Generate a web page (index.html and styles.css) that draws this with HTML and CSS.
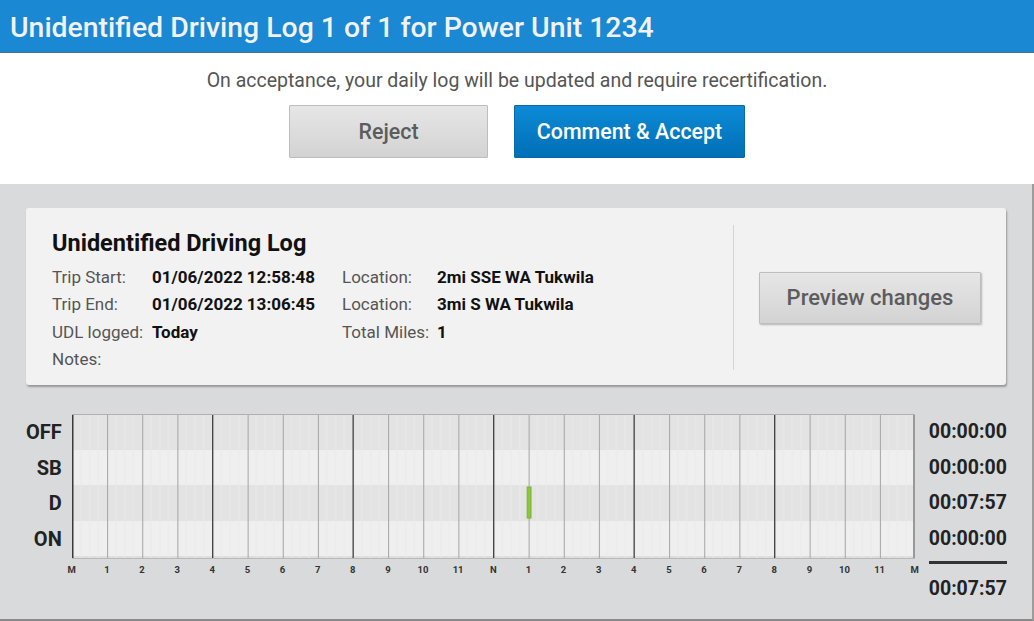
FILE: index.html
```html
<!DOCTYPE html>
<html lang="en">
<head>
    <meta charset="UTF-8">
    <meta name="viewport" content="width=device-width, initial-scale=1.0">
    <title>Unidentified Driving Log</title>
    <link rel="stylesheet" href="styles.css">
</head>
<body>

<header class="title-bar">
    <h1>Unidentified Driving Log 1 of 1 for Power Unit 1234</h1>
</header>

<section class="notice">
    <p>On acceptance, your daily log will be updated and require recertification.</p>
    <div class="notice-actions">
        <button class="btn btn-grey btn-reject">Reject</button>
        <button class="btn btn-blue btn-accept">Comment &amp; Accept</button>
    </div>
</section>

<main class="panel">
    <div class="card">
        <div class="card-info">
            <h2>Unidentified Driving Log</h2>
            <div class="info-grid">
                <span class="lbl">Trip Start:</span><span class="val">01/06/2022 12:58:48</span>
                <span class="lbl">Location:</span><span class="val">2mi SSE WA Tukwila</span>
                <span class="lbl">Trip End:</span><span class="val">01/06/2022 13:06:45</span>
                <span class="lbl">Location:</span><span class="val">3mi S WA Tukwila</span>
                <span class="lbl">UDL logged:</span><span class="val">Today</span>
                <span class="lbl">Total Miles:</span><span class="val">1</span>
                <span class="lbl">Notes:</span><span class="val"></span>
            </div>
        </div>
        <div class="card-side">
            <button class="btn btn-grey btn-preview">Preview changes</button>
        </div>
    </div>

    <div class="log">
        <div class="status-labels">
            <span>OFF</span>
            <span>SB</span>
            <span>D</span>
            <span>ON</span>
        </div>

        <div class="chart">
            <svg class="grid" width="843" height="145" viewBox="0 0 843 145">
                <defs>
                    <!-- one hour = 843 / 24 -->
                    <pattern id="quarters" width="35.125" height="145" patternUnits="userSpaceOnUse">
                        <rect x="8.3" y="0" width="1" height="145" fill="#e9e9e9"/>
                        <rect x="17.1" y="0" width="1" height="145" fill="#e9e9e9"/>
                        <rect x="25.8" y="0" width="1" height="145" fill="#e9e9e9"/>
                    </pattern>
                    <pattern id="hours" width="35.125" height="145" patternUnits="userSpaceOnUse">
                        <rect x="0" y="0" width="1" height="145" fill="#a3a3a3"/>
                    </pattern>
                </defs>
                <rect x="0" y="0" width="843" height="36" fill="#e3e3e3"/>
                <rect x="0" y="36" width="843" height="35" fill="#efefef"/>
                <rect x="0" y="71" width="843" height="36" fill="#e3e3e3"/>
                <rect x="0" y="107" width="843" height="35" fill="#efefef"/>
                <rect x="0" y="142" width="843" height="3" fill="#dedede"/>
                <rect x="0" y="0" width="843" height="145" fill="url(#quarters)"/>
                <rect x="0" y="0" width="843" height="145" fill="url(#hours)"/>
                <!-- every fourth hour is darker -->
                <rect x="0" y="0" width="1.5" height="145" fill="#3a3a3a"/>
                <rect x="140" y="0" width="1.2" height="145" fill="#444"/>
                <rect x="280.5" y="0" width="1.2" height="145" fill="#444"/>
                <rect x="421" y="0" width="1.2" height="145" fill="#444"/>
                <rect x="561.5" y="0" width="1.2" height="145" fill="#444"/>
                <rect x="702" y="0" width="1.2" height="145" fill="#444"/>
                <rect x="841" y="0" width="2" height="145" fill="#999"/>
                <rect x="0" y="0" width="843" height="1" fill="#b0b0b0"/>
                <rect x="0" y="144" width="843" height="1" fill="#b8b8b8"/>
                <!-- driving segment 12:58:48 - 13:06:45 -->
                <rect x="455.2" y="73" width="3.8" height="31" fill="#8cc63f" stroke="#7cb22f" stroke-width="1"/>
            </svg>
            <div class="hours">
                <span>M</span><span>1</span><span>2</span><span>3</span><span>4</span><span>5</span>
                <span>6</span><span>7</span><span>8</span><span>9</span><span>10</span><span>11</span>
                <span>N</span><span>1</span><span>2</span><span>3</span><span>4</span><span>5</span>
                <span>6</span><span>7</span><span>8</span><span>9</span><span>10</span><span>11</span>
                <span>M</span>
            </div>
        </div>

        <div class="totals">
            <span>00:00:00</span>
            <span>00:00:00</span>
            <span>00:07:57</span>
            <span>00:00:00</span>
            <span class="grand">00:07:57</span>
        </div>
    </div>
</main>

</body>
</html>
```

FILE: styles.css
```css
* {
    box-sizing: border-box;
}
html, body {
    margin: 0;
    height: 100%;
}
body {
    font-family: Roboto, "Noto Sans", Arial, sans-serif;
    color: #333;
    background: #fff;
    display: flex;
    flex-direction: column;
    overflow: hidden;
}

.title-bar {
    height: 53px;
    background: #1a88d2;
    border-bottom: 1px solid #4a6f8c;
    padding: 0 10px;
    display: flex;
    align-items: center;
}
.title-bar h1 {
    margin: 2px 0 0 0;
    font-size: 28.4px;
    font-weight: 500;
    color: #f2f2f2;
}

.notice {
    height: 131px;
    text-align: center;
    padding-top: 15px;
    background: #fff;
}
.notice p {
    margin: 0;
    font-size: 19.5px;
    color: #555;
    line-height: 25px;
}
.notice-actions {
    display: flex;
    justify-content: center;
    gap: 26px;
    margin-top: 12px;
}

.btn {
    font-family: inherit;
    font-size: 21.4px;
    font-weight: 500;
    border-radius: 1px;
    cursor: pointer;
}
.btn-grey {
    color: #5c5c5c;
    background: linear-gradient(#e6e6e6, #d3d3d3);
    border: 1px solid #bdbdbd;
}
.btn-blue {
    color: #fff;
    background: linear-gradient(#0d8ad6, #006fb6);
    border: 1px solid #0a6aa8;
}
.btn-reject {
    width: 199px;
    height: 53px;
}
.btn-accept {
    width: 231px;
    height: 53px;
}
.btn-preview {
    width: 222px;
    height: 52px;
    font-size: 22px;
    box-shadow: 1px 1px 2px rgba(0, 0, 0, 0.25);
}

.panel {
    flex: 1;
    background: #d9dadb;
    border-right: 2px solid #9c9c9c;
    border-bottom: 2px solid #8a8a8a;
    padding: 24px 26px 0 26px;
}

.card {
    height: 177px;
    background: #f2f2f2;
    border-radius: 3px;
    box-shadow: 1px 2px 2px rgba(0, 0, 0, 0.3);
    display: flex;
}
.card-info {
    flex: 1;
    padding: 21px 26px 0 26px;
}
.card-info h2 {
    margin: 0 0 7px 0;
    font-size: 23.5px;
    font-weight: 700;
    color: #111;
    line-height: 28px;
}
.info-grid {
    display: grid;
    grid-template-columns: 100px 190px 95px auto;
    font-size: 17px;
    line-height: 27.4px;
}
.lbl {
    color: #555;
}
.val {
    font-weight: 700;
    color: #111;
}
.card-side {
    width: 273px;
    margin: 17px 0 15px 0;
    border-left: 1px solid #d4d4d4;
    display: flex;
    align-items: center;
    justify-content: center;
}

.log {
    display: flex;
    margin-top: 29px;
}
.status-labels {
    width: 36px;
    display: flex;
    flex-direction: column;
    align-items: flex-end;
    font-size: 20px;
    font-weight: 700;
    color: #222;
}
.status-labels span {
    height: 35.5px;
    line-height: 36px;
}
.chart {
    margin-left: 10px;
    width: 843px;
}
.grid {
    display: block;
}
.hours {
    display: flex;
    justify-content: space-between;
    margin-top: 5px;
}
.hours span {
    width: 0;
    display: flex;
    justify-content: center;
    font-size: 9.5px;
    font-weight: 700;
    color: #333;
}
.totals {
    margin-left: 14px;
    width: 80px;
    display: flex;
    flex-direction: column;
    font-size: 19.5px;
    font-weight: 700;
    color: #222;
}
.totals span {
    height: 35.5px;
    line-height: 36px;
}
.totals .grand {
    width: 78px;
    border-top: 3px solid #333;
    margin-top: 5px;
    padding-top: 7px;
}
```
